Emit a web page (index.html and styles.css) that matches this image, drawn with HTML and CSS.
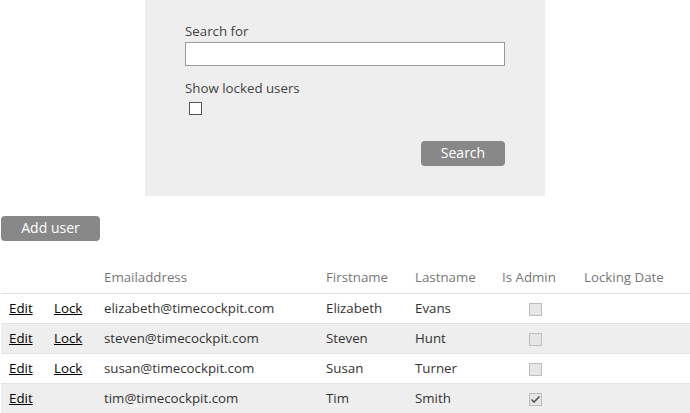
FILE: index.html
```html
<!DOCTYPE html>
<html>
<head>
<meta charset="utf-8">
<link rel="stylesheet" href="styles.css">
</head>
<body>
<div class="panel">
  <label class="label">Search for</label>
  <input class="search-input" type="text">
  <label class="label label-locked">Show locked users</label>
  <input class="check" type="checkbox">
  <div class="actions"><button class="btn btn-search">Search</button></div>
</div>
<button class="btn btn-add">Add user</button>
<table class="users">
  <colgroup>
    <col class="c-edit"><col class="c-lock"><col class="c-email"><col class="c-first"><col class="c-last"><col class="c-admin"><col class="c-date">
  </colgroup>
  <thead>
    <tr><th></th><th></th><th>Emailaddress</th><th>Firstname</th><th>Lastname</th><th>Is Admin</th><th>Locking Date</th></tr>
  </thead>
  <tbody>
    <tr><td><a href="#">Edit</a></td><td><a href="#">Lock</a></td><td>elizabeth@timecockpit.com</td><td>Elizabeth</td><td>Evans</td><td class="center"><span class="cb"></span></td><td></td></tr>
    <tr class="alt"><td><a href="#">Edit</a></td><td><a href="#">Lock</a></td><td>steven@timecockpit.com</td><td>Steven</td><td>Hunt</td><td class="center"><span class="cb"></span></td><td></td></tr>
    <tr><td><a href="#">Edit</a></td><td><a href="#">Lock</a></td><td>susan@timecockpit.com</td><td>Susan</td><td>Turner</td><td class="center"><span class="cb"></span></td><td></td></tr>
    <tr class="alt"><td><a href="#">Edit</a></td><td></td><td>tim@timecockpit.com</td><td>Tim</td><td>Smith</td><td class="center"><span class="cb checked"><svg viewBox="0 0 11 11" width="11" height="11"><path d="M1.5 5.5 L4 8 L9.5 2.5" fill="none" stroke="#555" stroke-width="1.6"/></svg></span></td><td></td></tr>
  </tbody>
</table>
</body>
</html>
```
FILE: styles.css
```css
* { box-sizing: border-box; }
html, body { margin: 0; padding: 0; background: #fff; }
body {
  font-family: "Open Sans", "Noto Sans", sans-serif;
  font-size: 13.3px;
  color: #333;
}
.panel {
  width: 400px;
  height: 196px;
  margin: 0 auto;
  background: #eeeeee;
  padding: 22px 40px 0 40px;
  display: flex;
  flex-direction: column;
  align-items: flex-start;
}
.label {
  display: block;
  line-height: 18px;
  color: #444;
}
.search-input {
  margin: 2px 0 0 0;
  width: 320px;
  height: 24px;
  border: 1px solid #9a9a9a;
  background: #fff;
  padding: 0 4px;
  font: inherit;
}
.label-locked { margin-top: 13px; }
.check {
  appearance: none;
  -webkit-appearance: none;
  margin: 5px 0 0 4px;
  width: 13px;
  height: 13px;
  border: 1px solid #555;
  background: #fff;
}
.actions {
  align-self: stretch;
  display: flex;
  justify-content: flex-end;
  margin-top: 26px;
}
.btn {
  border: 0;
  background: #888888;
  color: #fff;
  font-family: inherit;
  font-size: 14px;
  border-radius: 4px;
  height: 25px;
  padding: 0 0 2px 0;
  line-height: 23px;
}
.btn-search { width: 84px; }
.btn-add { display: block; width: 99px; margin: 20px 0 0 1px; }
.users {
  margin: 22px 0 0 1px;
  border-collapse: collapse;
  table-layout: fixed;
  width: 689px;
}
.c-edit { width: 45px; }
.c-lock { width: 50px; }
.c-email { width: 222px; }
.c-first { width: 89px; }
.c-last { width: 87px; }
.c-admin { width: 82px; }
.c-date { width: 114px; }
.users th, .users td {
  padding: 0 8px;
  height: 30px;
  text-align: left;
  white-space: nowrap;
  border-bottom: 1px solid #e2e2e2;
}
.users th {
  font-weight: normal;
  color: #777;
  padding-bottom: 2px;
}
.users td { color: #333; }
.users tr.alt td { background: #eeeeee; }
.users a { color: #000; text-decoration: underline; }
.users td.center { text-align: center; }
.cb {
  display: inline-block;
  vertical-align: middle;
  width: 13px;
  height: 13px;
  border: 1px solid #bdbdbd;
  background: #e6e6e6;
  position: relative;
}
.cb svg { position: absolute; left: 0; top: 0; }
```
